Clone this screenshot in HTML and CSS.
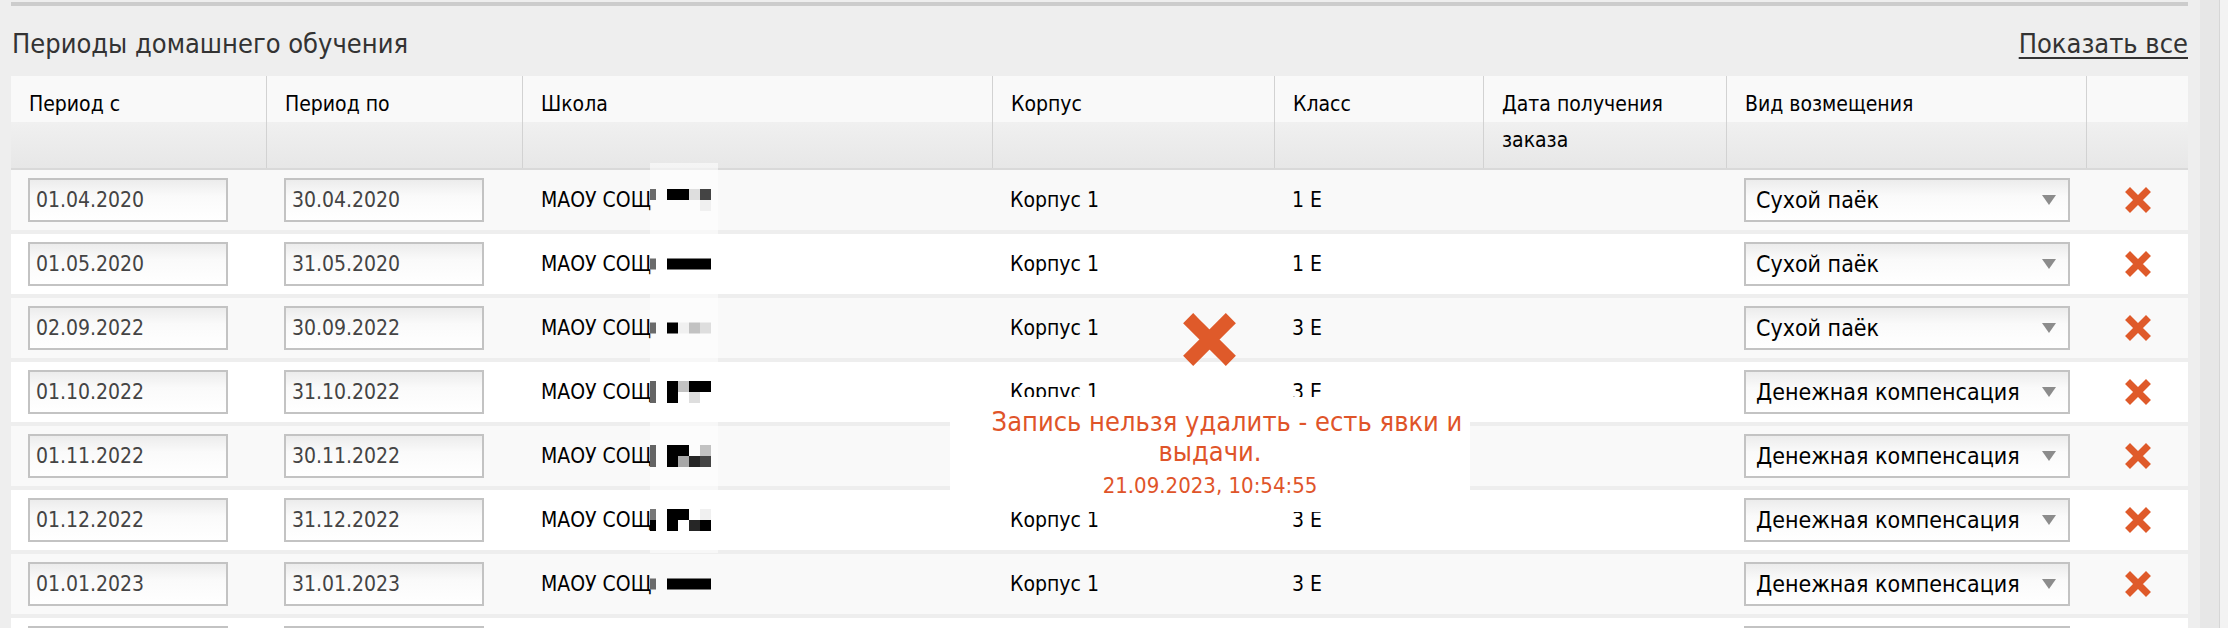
FILE: index.html
```html
<!DOCTYPE html>
<html lang="ru">
<head>
<meta charset="utf-8">
<title>Периоды домашнего обучения</title>
<link rel="stylesheet" href="styles.css">
</head>
<body>
<div class="page">
  <div class="main">
    <div class="topbar"></div>
    <div class="title-row">
      <h2 class="title">Периоды домашнего обучения</h2>
      <a class="show-all" href="#">Показать все</a>
    </div>
    <div class="table">
      <div class="thead">
        <div class="th">Период с</div>
        <div class="th">Период по</div>
        <div class="th">Школа</div>
        <div class="th">Корпус</div>
        <div class="th">Класс</div>
        <div class="th">Дата получения заказа</div>
        <div class="th">Вид возмещения</div>
        <div class="th last"></div>
      </div>

      <div class="row odd">
        <div class="td"><input class="date" type="text" value="01.04.2020" readonly></div>
        <div class="td"><input class="date" type="text" value="30.04.2020" readonly></div>
        <div class="td school">МАОУ СОЩ<span class="redact"><span class="bar b1"></span><span class="px"><i class="k"></i><i class="k"></i><i class="g1"></i><i class="g4"></i><i></i><i></i><i></i><i class="g0"></i></span></span></div>
        <div class="td">Корпус 1</div>
        <div class="td">1 Е</div>
        <div class="td"></div>
        <div class="td"><div class="select"><span>Сухой паёк</span><svg class="caret" viewBox="0 0 14 10"><path d="M0 0H14L7 10Z"/></svg></div></div>
        <div class="td del"><svg class="x" viewBox="0 0 26 26"><path d="M5 5L21 21M21 5L5 21"/></svg></div>
      </div>

      <div class="row even">
        <div class="td"><input class="date" type="text" value="01.05.2020" readonly></div>
        <div class="td"><input class="date" type="text" value="31.05.2020" readonly></div>
        <div class="td school">МАОУ СОЩ<span class="redact"><span class="bar b1"></span><span class="px"><i class="k"></i><i class="k"></i><i class="k"></i><i class="k"></i></span></span></div>
        <div class="td">Корпус 1</div>
        <div class="td">1 Е</div>
        <div class="td"></div>
        <div class="td"><div class="select"><span>Сухой паёк</span><svg class="caret" viewBox="0 0 14 10"><path d="M0 0H14L7 10Z"/></svg></div></div>
        <div class="td del"><svg class="x" viewBox="0 0 26 26"><path d="M5 5L21 21M21 5L5 21"/></svg></div>
      </div>

      <div class="row odd">
        <div class="td"><input class="date" type="text" value="02.09.2022" readonly></div>
        <div class="td"><input class="date" type="text" value="30.09.2022" readonly></div>
        <div class="td school">МАОУ СОЩ<span class="redact"><span class="bar b1"></span><span class="px"><i class="k"></i><i class="g0"></i><i class="g2"></i><i class="g1"></i></span></span></div>
        <div class="td">Корпус 1</div>
        <div class="td">3 Е</div>
        <div class="td"></div>
        <div class="td"><div class="select"><span>Сухой паёк</span><svg class="caret" viewBox="0 0 14 10"><path d="M0 0H14L7 10Z"/></svg></div></div>
        <div class="td del"><svg class="x" viewBox="0 0 26 26"><path d="M5 5L21 21M21 5L5 21"/></svg></div>
      </div>

      <div class="row even">
        <div class="td"><input class="date" type="text" value="01.10.2022" readonly></div>
        <div class="td"><input class="date" type="text" value="31.10.2022" readonly></div>
        <div class="td school">МАОУ СОЩ<span class="redact"><span class="bar b2"></span><span class="px"><i class="k"></i><i class="g2"></i><i class="k"></i><i class="k"></i><i class="k"></i><i></i><i class="g1"></i><i></i></span></span></div>
        <div class="td">Корпус 1</div>
        <div class="td">3 Е</div>
        <div class="td"></div>
        <div class="td"><div class="select"><span>Денежная компенсация</span><svg class="caret" viewBox="0 0 14 10"><path d="M0 0H14L7 10Z"/></svg></div></div>
        <div class="td del"><svg class="x" viewBox="0 0 26 26"><path d="M5 5L21 21M21 5L5 21"/></svg></div>
      </div>

      <div class="row odd">
        <div class="td"><input class="date" type="text" value="01.11.2022" readonly></div>
        <div class="td"><input class="date" type="text" value="30.11.2022" readonly></div>
        <div class="td school">МАОУ СОЩ<span class="redact"><span class="bar b2"></span><span class="px"><i class="k"></i><i class="k"></i><i></i><i class="g2"></i><i class="k"></i><i class="g3"></i><i class="g5"></i><i class="g4"></i></span></span></div>
        <div class="td">Корпус 1</div>
        <div class="td">3 Е</div>
        <div class="td"></div>
        <div class="td"><div class="select"><span>Денежная компенсация</span><svg class="caret" viewBox="0 0 14 10"><path d="M0 0H14L7 10Z"/></svg></div></div>
        <div class="td del"><svg class="x" viewBox="0 0 26 26"><path d="M5 5L21 21M21 5L5 21"/></svg></div>
      </div>

      <div class="row even">
        <div class="td"><input class="date" type="text" value="01.12.2022" readonly></div>
        <div class="td"><input class="date" type="text" value="31.12.2022" readonly></div>
        <div class="td school">МАОУ СОЩ<span class="redact"><span class="bar b3"></span><span class="px"><i class="k"></i><i class="k"></i><i></i><i class="g0"></i><i class="k"></i><i></i><i class="g5"></i><i class="k"></i></span></span></div>
        <div class="td">Корпус 1</div>
        <div class="td">3 Е</div>
        <div class="td"></div>
        <div class="td"><div class="select"><span>Денежная компенсация</span><svg class="caret" viewBox="0 0 14 10"><path d="M0 0H14L7 10Z"/></svg></div></div>
        <div class="td del"><svg class="x" viewBox="0 0 26 26"><path d="M5 5L21 21M21 5L5 21"/></svg></div>
      </div>

      <div class="row odd">
        <div class="td"><input class="date" type="text" value="01.01.2023" readonly></div>
        <div class="td"><input class="date" type="text" value="31.01.2023" readonly></div>
        <div class="td school">МАОУ СОЩ<span class="redact"><span class="bar b1"></span><span class="px"><i class="k"></i><i class="k"></i><i class="k"></i><i class="k"></i></span></span></div>
        <div class="td">Корпус 1</div>
        <div class="td">3 Е</div>
        <div class="td"></div>
        <div class="td"><div class="select"><span>Денежная компенсация</span><svg class="caret" viewBox="0 0 14 10"><path d="M0 0H14L7 10Z"/></svg></div></div>
        <div class="td del"><svg class="x" viewBox="0 0 26 26"><path d="M5 5L21 21M21 5L5 21"/></svg></div>
      </div>

      <div class="row even">
        <div class="td"><input class="date" type="text" value="01.02.2023" readonly></div>
        <div class="td"><input class="date" type="text" value="28.02.2023" readonly></div>
        <div class="td school">МАОУ СОЩ</div>
        <div class="td">Корпус 1</div>
        <div class="td">3 Е</div>
        <div class="td"></div>
        <div class="td"><div class="select"><span>Денежная компенсация</span><svg class="caret" viewBox="0 0 14 10"><path d="M0 0H14L7 10Z"/></svg></div></div>
        <div class="td del"><svg class="x" viewBox="0 0 26 26"><path d="M5 5L21 21M21 5L5 21"/></svg></div>
      </div>

      <div class="redact-strip"></div>
      <svg class="big-x" viewBox="0 0 26 26"><path d="M5 5L21 21M21 5L5 21"/></svg>
      <div class="toast">
        <div class="toast-msg"><span class="line1">Запись нельзя удалить - есть явки и</span><br>выдачи.</div>
        <div class="toast-time">21.09.2023, 10:54:55</div>
      </div>
    </div>
  </div>
  <div class="scrollbar"><div class="track"></div><div class="edge"></div></div>
</div>
</body>
</html>
```

FILE: styles.css
```css
* { box-sizing: border-box; }

html, body {
  margin: 0;
  padding: 0;
  height: 100%;
  overflow: hidden;
  background: #eeeeee;
}

body {
  font-family: "DejaVu Sans", "Noto Sans", sans-serif;
  font-stretch: condensed;
  font-size: 21px;
  color: #000;
}

.page {
  display: flex;
  align-items: stretch;
  min-height: 100%;
}

.main {
  margin-left: 11px;
  width: 2177px;
  flex: none;
}

.topbar {
  margin-top: 2px;
  height: 4px;
  background: #cccccc;
}

.title-row {
  height: 70px;
  padding: 4px 0 0 1px;
  display: flex;
  align-items: center;
  justify-content: space-between;
}

.title {
  margin: 0;
  font-size: 27px;
  font-weight: normal;
  color: #333;
}

.show-all {
  font-size: 27px;
  color: #333;
  text-decoration: underline;
  text-underline-offset: 4px;
}

.table {
  position: relative;
}

.thead,
.row {
  display: grid;
  grid-template-columns: 256px 256px 470px 282px 209px 243px 360px 101px;
}

.thead {
  background: linear-gradient(to bottom, #f9f9f9 0, #f9f9f9 46px, #f0f0f0 46px, #e7e7e7 100%);
  border-bottom: 2px solid #d9d9d9;
}

.th {
  padding: 10px 18px;
  line-height: 36px;
  border-right: 1px solid #d2d2d2;
}

.th.last { border-right: none; }

.row {
  height: 60px;
  margin-bottom: 4px;
}

.row.odd { background: #f9f9f9; }
.row.even { background: #ffffff; }

.td {
  display: flex;
  align-items: center;
  padding: 0 17px;
  position: relative;
  white-space: nowrap;
}

.td.school { padding-left: 18px; }

.date {
  width: 200px;
  height: 44px;
  border: 2px solid #c3c3c3;
  padding: 0 6px;
  font-family: inherit;
  font-stretch: condensed;
  font-size: 21px;
  color: #444;
  background: linear-gradient(to bottom, #ececec 0, #fafafa 40%, #fff 100%);
  outline: none;
}

.select {
  width: 327px;
  height: 44px;
  border: 2px solid #c3c3c3;
  padding: 0 12px 0 10px;
  display: flex;
  align-items: center;
  justify-content: space-between;
  font-size: 23px;
  background: linear-gradient(to bottom, #ececec 0, #fafafa 40%, #fff 100%);
}

.caret {
  width: 14px;
  height: 10px;
  fill: #8c8c8c;
}

.td.del { justify-content: center; }

.x {
  width: 26px;
  height: 26px;
}

.x path,
.big-x path {
  fill: none;
  stroke: #df5a2a;
  stroke-width: 7;
  stroke-linecap: square;
}

.redact-strip {
  position: absolute;
  left: 639px;
  top: 87px;
  width: 68px;
  height: 390px;
  background: rgba(255, 255, 255, 0.55);
  z-index: 1;
}

.redact {
  position: absolute;
  left: 127px;
  top: 50%;
  transform: translateY(-50%);
  display: flex;
  gap: 11px;
  z-index: 2;
}

.bar {
  width: 6px;
  height: 11px;
  background: #6a6a6a;
}

.bar.b2 { height: 22px; background: #646464; }
.bar.b3 { height: 22px; background: linear-gradient(#777 50%, #000 50%); }

.px {
  display: grid;
  grid-template-columns: repeat(4, 11px);
  grid-auto-rows: 11px;
}

.px i { display: block; }
.px .k { background: #000; }
.px .g0 { background: #f0f0f0; }
.px .g1 { background: #dedede; }
.px .g2 { background: #c2c2c2; }
.px .g3 { background: #a8a8a8; }
.px .g4 { background: #444; }
.px .g5 { background: #262626; }

.big-x {
  position: absolute;
  left: 1172px;
  top: 237px;
  width: 53px;
  height: 53px;
  z-index: 3;
}

.toast {
  position: absolute;
  left: 939px;
  top: 321px;
  width: 520px;
  height: 115px;
  background: #fff;
  padding-top: 10px;
  text-align: center;
  color: #df5429;
  z-index: 3;
}

.toast-msg {
  font-size: 27px;
  line-height: 30px;
}

.line1 {
  display: inline-block;
  padding-left: 34px;
}

.toast-time {
  margin-top: 2px;
  font-size: 22px;
  line-height: 34px;
}

.scrollbar {
  margin-left: 12px;
  width: 28px;
  display: flex;
}

.track {
  width: 20px;
  background: #e7e7e7;
  border-right: 1px solid #d6d6d6;
}

.edge {
  flex: 1;
  background: #f3f3f3;
}
```
